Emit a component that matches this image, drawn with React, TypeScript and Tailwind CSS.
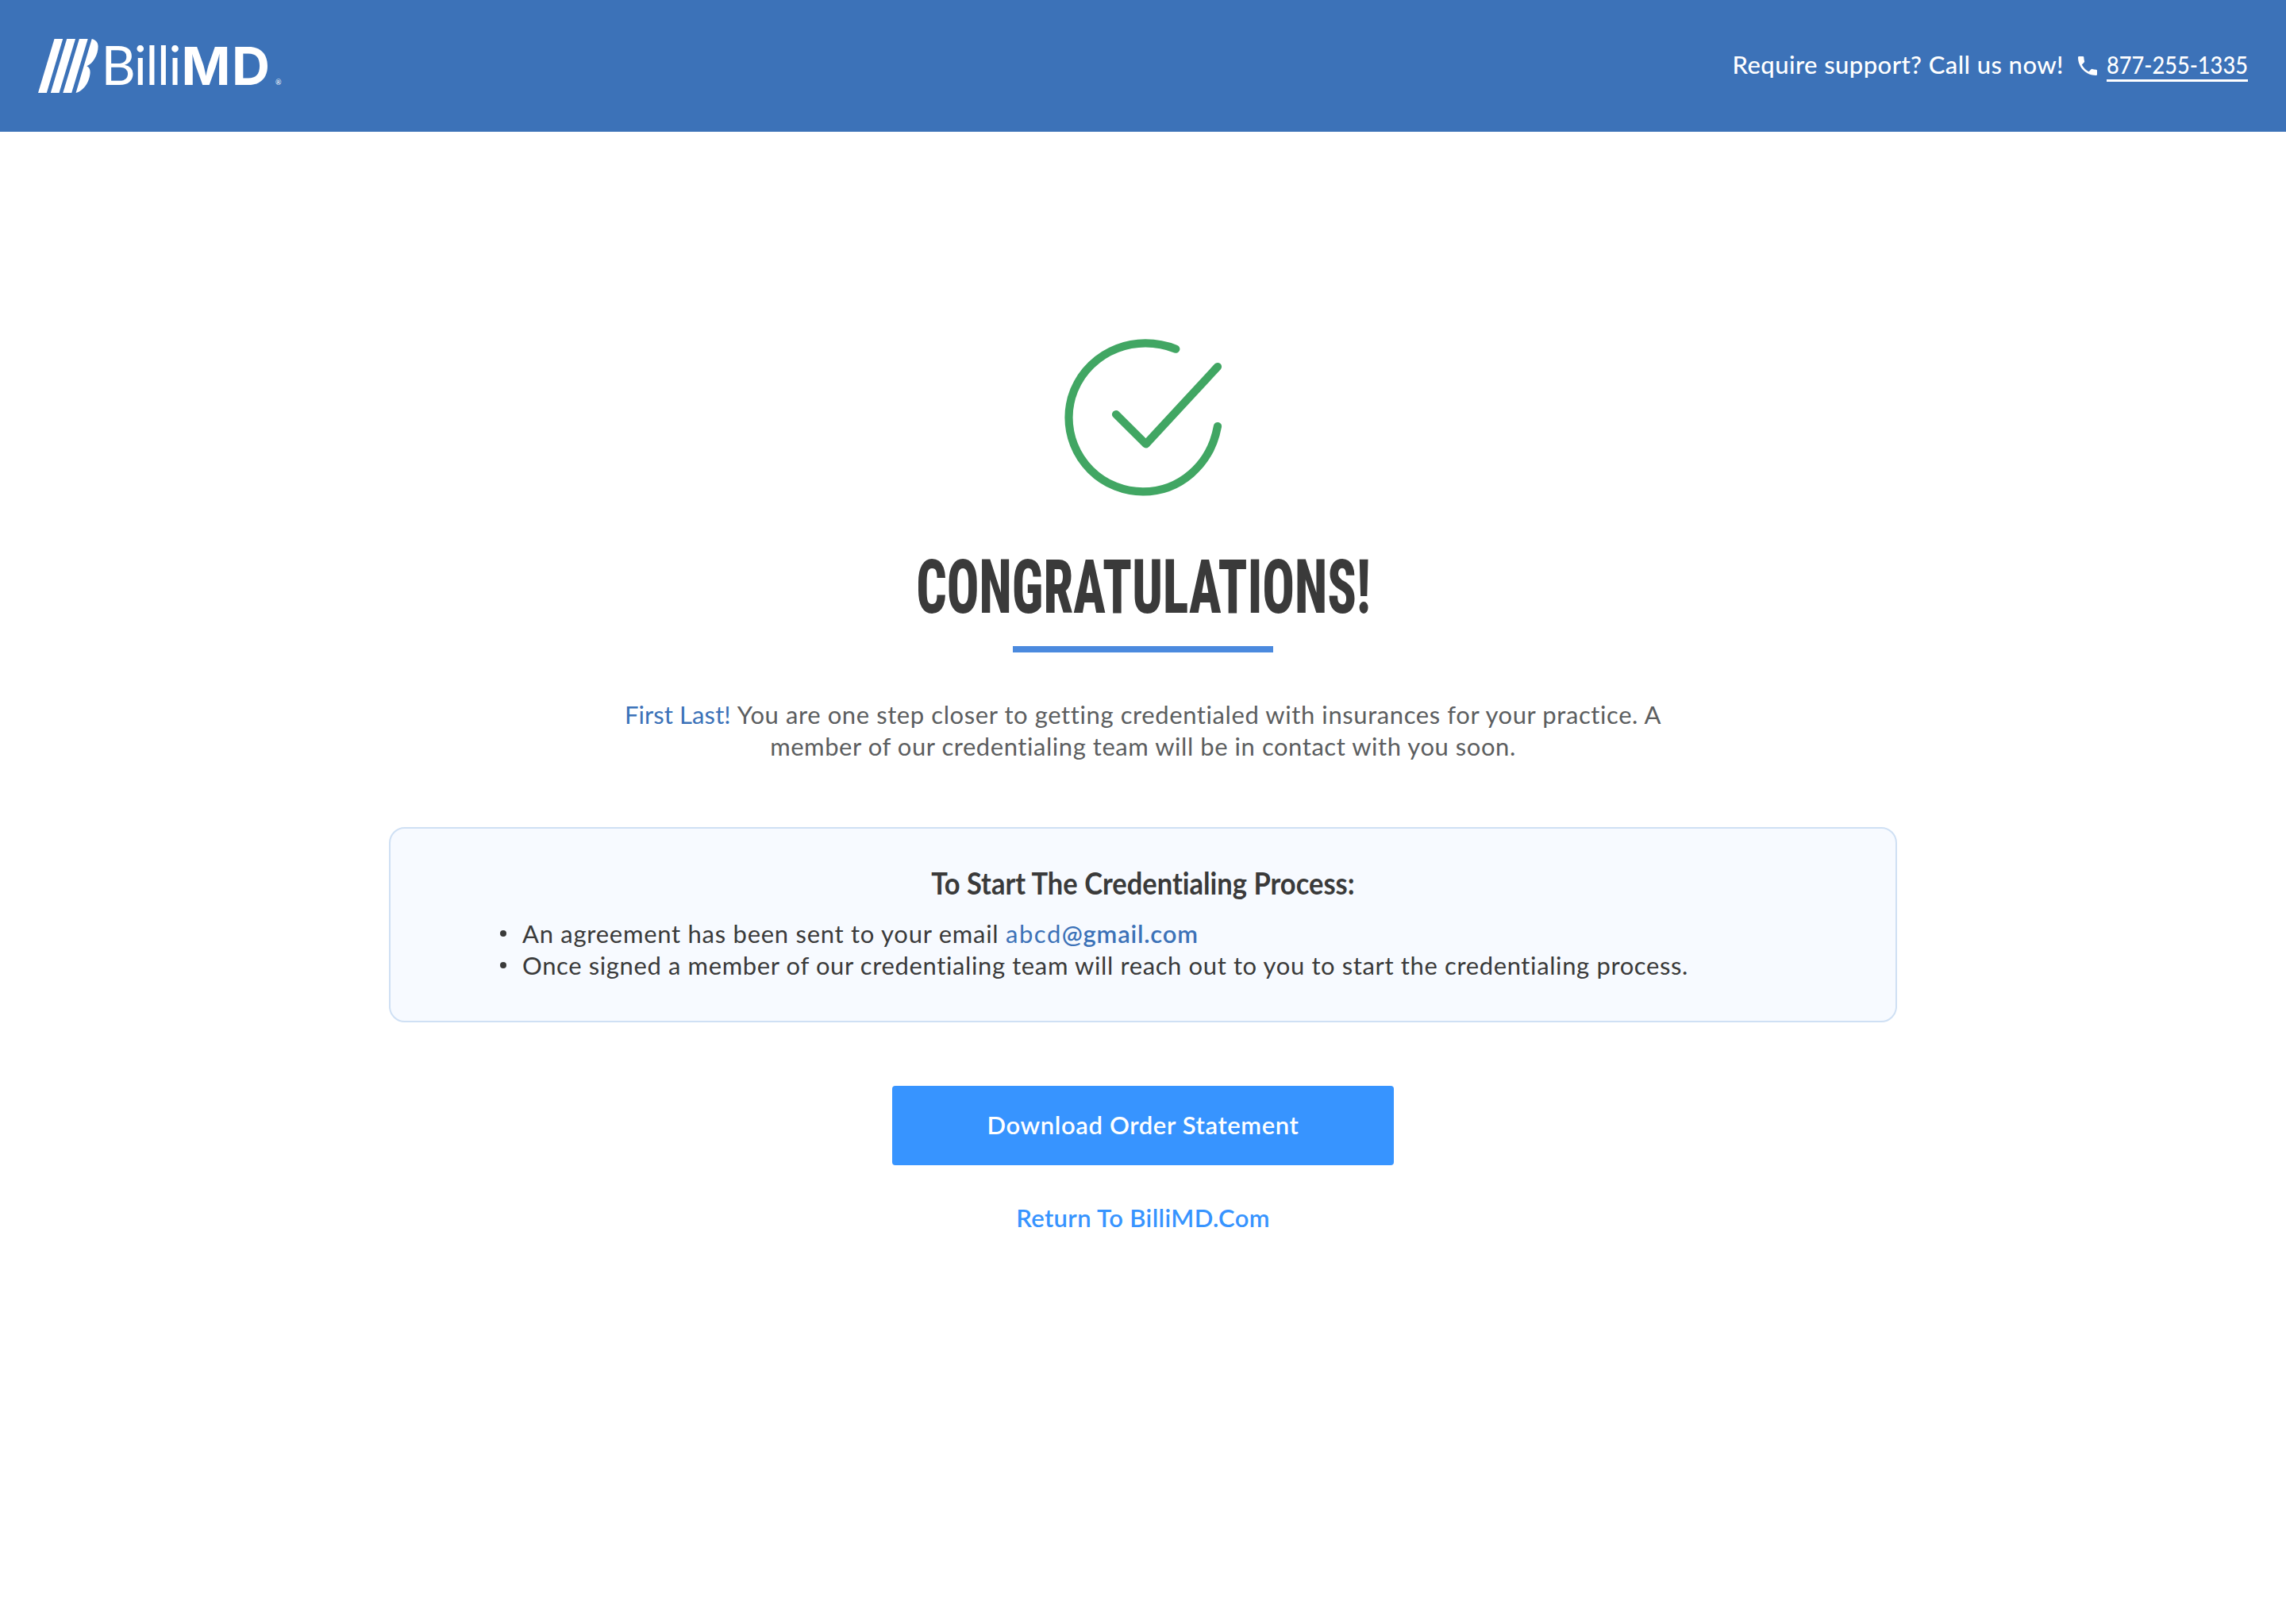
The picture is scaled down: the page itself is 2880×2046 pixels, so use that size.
function Logo() {
  return (
    <svg className="overflow-visible" width="310" height="72" viewBox="48 46 310 72" fill="#ffffff" role="img" aria-label="BilliMD">
      <path d="M68.5 49H79.2L58.8 117H48Z" />
      <path d="M84.2 49H95L74.5 117H63.8Z" />
      <path d="M99.9 49H110.7L90.2 117H79.3Z" />
      <path d="M115.7 49C120.5 50 123.6 53.5 123.6 58.5C123.6 69 117 80.5 109.3 83.2C112.3 84.8 113.6 87.3 113.6 91C113.2 102.5 105.5 114.8 95.6 117Z" />
      <text x="127.6" y="107.4" fontFamily="Lato, sans-serif" fontSize="67" fontWeight="400" textLength="101">Billi</text>
      <text x="228.6" y="107.4" fontFamily="Inter, sans-serif" fontSize="66.5" fontWeight="700" textLength="111.5">MD</text>
      <text x="347" y="107" fontFamily="Lato, sans-serif" fontSize="9">®</text>
    </svg>
  );
}

function PhoneIcon() {
  return (
    <svg className="mt-2.5 mr-3 ml-[18px] size-6" viewBox="3 3 18 18" fill="currentColor">
      <path d="M6.54 3H4a1 1 0 0 0-1 1c0 9.39 7.61 17 17 17a1 1 0 0 0 1-1v-3.5a1 1 0 0 0-1-1c-1.25 0-2.45-.2-3.57-.57a1 1 0 0 0-1.02.24l-2.2 2.2a15.05 15.05 0 0 1-6.59-6.58l2.2-2.21a1 1 0 0 0 .25-1.02A11.4 11.4 0 0 1 8.5 4a1 1 0 0 0-1-1z" />
    </svg>
  );
}

function SuccessIcon() {
  return (
    <svg width="200" height="200" viewBox="1340 426 200 200" fill="none" stroke="#41a663" strokeWidth="10.2" strokeLinecap="round" strokeLinejoin="round">
      <path d="M1534 537C1525 586 1486 619.4 1440 619.4A93.5 93.5 0 0 1 1346.5 526A96.5 93.6 0 0 1 1443 432.4Q1463 432.4 1481.3 439.7" />
      <path d="M1406 522L1443.7 559.5L1534 462" />
    </svg>
  );
}

function Bullet() {
  return <i className="mr-5 size-2 rounded-full bg-[#3a3a3a]" />;
}

export default function App() {
  return (
    <div className="min-h-[2046px] w-full bg-white font-['Lato',sans-serif] text-[31px] leading-10 [font-variant-ligatures:none]">
      <header className="flex h-[166px] items-center justify-between bg-[#3c72b8] pr-12 pb-0.5 pl-12 text-white">
        <Logo />
        <div className="flex items-start font-medium">
          <span className="tracking-[0.43px] whitespace-nowrap">Require support? Call us now!</span>
          <PhoneIcon />
          <a className="h-[42px] w-[178px] border-b-3 border-white">
            <span className="inline-block origin-left scale-x-[0.877] whitespace-nowrap">877-255-1335</span>
          </a>
        </div>
      </header>

      <main className="flex flex-col items-center pt-[260px]">
        <SuccessIcon />

        <h1 className="mt-[62px] flex h-[104px] w-[564px] justify-center font-['Roboto_Condensed',sans-serif] text-[94.5px] leading-[104px] font-extrabold text-[#3a3a3a]">
          <span className="scale-x-[0.715] whitespace-nowrap">CONGRATULATIONS!</span>
        </h1>
        <div className="mt-[22px] h-2 w-[328px] bg-[#4b8ade]" />

        <p className="mt-[58px] flex flex-col items-center text-[#5c5e60]">
          <span className="whitespace-nowrap">
            <span className="tracking-[0.1px] text-[#3c72b8]">First Last! </span>
            <span className="tracking-[0.59px]">You are one step closer to getting credentialed with insurances for your practice. A</span>
          </span>
          <span className="tracking-[0.55px] whitespace-nowrap">member of our credentialing team will be in contact with you soon.</span>
        </p>

        <section className="mt-[82px] h-[246px] w-[1900px] rounded-[20px] border-2 border-[#cfe0f4] bg-[#f7faff] text-[#3a3a3a]">
          <h2 className="mt-[45px] flex h-12 justify-center text-[37.5px] leading-[48px] font-bold">
            <span className="scale-x-[0.92] whitespace-nowrap">To Start The Credentialing Process:</span>
          </h2>
          <ul className="mt-[19px] ml-[138px]">
            <li className="flex items-center">
              <Bullet />
              <span className="whitespace-nowrap">
                <span className="tracking-[0.73px]">An agreement has been sent to your email </span>
                <span className="tracking-[1.5px] text-[#3c72b8]">abcd</span>
                <span className="tracking-[0.78px] font-semibold text-[#3c72b8]">@gmail.com</span>
              </span>
            </li>
            <li className="flex items-center">
              <Bullet />
              <span className="tracking-[0.62px] whitespace-nowrap">Once signed a member of our credentialing team will reach out to you to start the credentialing process.</span>
            </li>
          </ul>
        </section>

        <button className="mt-20 flex h-[100px] w-[632px] items-center justify-center rounded bg-[#3794ff] pb-0.5 font-semibold text-white">
          <span className="tracking-[0.62px] whitespace-nowrap">Download Order Statement</span>
        </button>
        <a className="mt-[46px] font-semibold tracking-[0.37px] whitespace-nowrap text-[#3794ff]">Return To BilliMD.Com</a>
      </main>
    </div>
  );
}
